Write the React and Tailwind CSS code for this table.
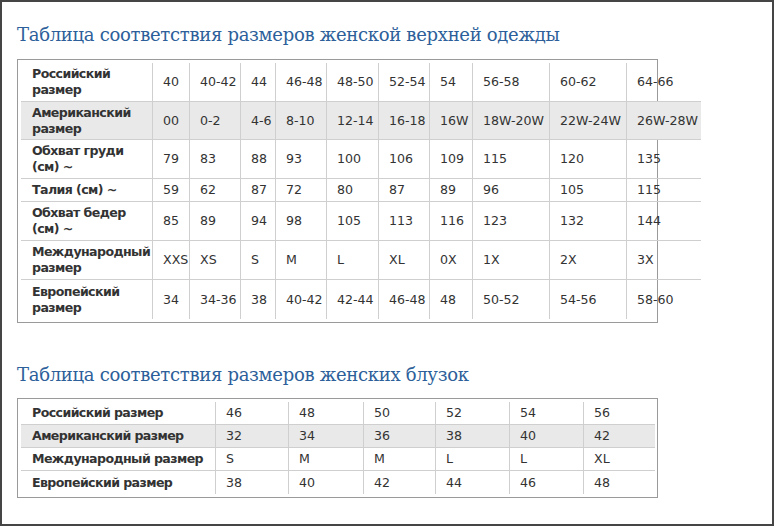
const outerCols = [131, 37, 51, 35, 51, 52, 51, 43, 77, 77, 75];

const outerRows = [
  { h: 39, label: ["Российский", "размер"], cells: ["40", "40-42", "44", "46-48", "48-50", "52-54", "54", "56-58", "60-62", "64-66"] },
  { h: 38, gray: true, label: ["Американский", "размер"], cells: ["00", "0-2", "4-6", "8-10", "12-14", "16-18", "16W", "18W-20W", "22W-24W", "26W-28W"] },
  { h: 39, label: ["Обхват груди", "(см) ~"], cells: ["79", "83", "88", "93", "100", "106", "109", "115", "120", "135"] },
  { h: 23, label: ["Талия (см) ~"], cells: ["59", "62", "87", "72", "80", "87", "89", "96", "105", "115"] },
  { h: 39, label: ["Обхват бедер", "(см) ~"], cells: ["85", "89", "94", "98", "105", "113", "116", "123", "132", "144"] },
  { h: 39, label: ["Международный", "размер"], cells: ["XXS", "XS", "S", "M", "L", "XL", "0X", "1X", "2X", "3X"] },
  { h: 39, last: true, label: ["Европейский", "размер"], cells: ["34", "34-36", "38", "40-42", "42-44", "46-48", "48", "50-52", "54-56", "58-60"] },
];

const blouseCols = [194, 73, 75, 72, 74, 74, 72];

const blouseRows = [
  { label: "Российский размер", cells: ["46", "48", "50", "52", "54", "56"] },
  { label: "Американский размер", gray: true, cells: ["32", "34", "36", "38", "40", "42"] },
  { label: "Международный размер", cells: ["S", "M", "M", "L", "L", "XL"] },
  { label: "Европейский размер", last: true, cells: ["38", "40", "42", "44", "46", "48"] },
];

const Heading = ({ children, className }) => (
  <h2
    className={`h-[24px] leading-[24px] text-[18px] tracking-[-0.3px] text-[#2d5f9a] font-normal whitespace-nowrap ${className}`}
    style={{ fontFamily: '"DejaVu Serif", "Liberation Serif", serif' }}
  >
    {children}
  </h2>
);

const Row = ({ row, cols, height }) => (
  <div
    className={`flex ${row.gray ? "bg-[#e9e9e9]" : ""} ${row.last ? "" : "border-b border-[#cfcfcf]"}`}
    style={{ height }}
  >
    <div
      className="flex flex-col justify-center pl-[11px] font-bold leading-[16px] tracking-[-0.6px] whitespace-nowrap"
      style={{ width: cols[0] }}
    >
      {Array.isArray(row.label) ? row.label.map((l) => <span key={l}>{l}</span>) : row.label}
    </div>
    {row.cells.map((c, i) => (
      <div
        key={i}
        className="flex items-center pl-[10px] border-l border-[#cfcfcf] leading-[16px] whitespace-nowrap"
        style={{ width: cols[i + 1] }}
      >
        {c}
      </div>
    ))}
  </div>
);

export default function App() {
  return (
    <div
      className="w-[774px] h-[526px] border-2 border-[#454545] bg-white pl-[15px] pt-[21px] text-[12.6px] text-[#333]"
      style={{ fontFamily: '"DejaVu Sans", Verdana, sans-serif' }}
    >
      <Heading className="mb-[12px]">Таблица соответствия размеров женской верхней одежды</Heading>

      <div className="w-[641px] border border-[#9a9a9a] p-[3px]">
        <div className="w-[680px]">
          {outerRows.map((r) => (
            <Row key={r.label.join(" ")} row={r} cols={outerCols} height={r.h} />
          ))}
        </div>
      </div>

      <Heading className="mt-[40px] mb-[11px]">Таблица соответствия размеров женских блузок</Heading>

      <div className="w-[641px] border border-[#9a9a9a] p-[3px]">
        <div className="w-[634px]">
          {blouseRows.map((r) => (
            <Row key={r.label} row={r} cols={blouseCols} height={23} />
          ))}
        </div>
      </div>
    </div>
  );
}
